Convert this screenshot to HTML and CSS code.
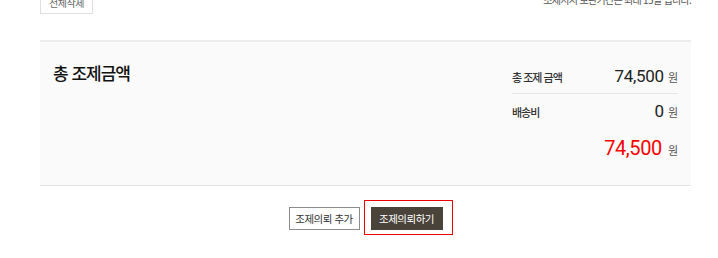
FILE: index.html
```html
<!DOCTYPE html>
<html lang="ko">
<head>
<meta charset="utf-8">
<title>조제 금액</title>
<link rel="stylesheet" href="styles.css">
</head>
<body>
<div class="wrap">
  <div class="toolbar">
    <button class="btn-del" type="button">전체삭제</button>
    <p class="notice">조제지시 보관기간은 최대 15일 입니다.</p>
  </div>

  <section class="summary">
    <h2 class="summary-title">총 조제금액</h2>
    <div class="price-box">
      <div class="price-row first">
        <span class="label">총 조제 금액</span>
        <span class="amount"><span class="num">74,500</span><span class="won">원</span></span>
      </div>
      <div class="price-row">
        <span class="label">배송비</span>
        <span class="amount"><span class="num">0</span><span class="won">원</span></span>
      </div>
      <div class="price-row total">
        <span class="amount"><span class="num">74,500</span><span class="won">원</span></span>
      </div>
    </div>
  </section>

  <div class="actions">
    <button class="btn btn-line" type="button">조제의뢰 추가</button>
    <span class="highlight">
      <button class="btn btn-dark" type="button">조제의뢰하기</button>
    </span>
  </div>
</div>
</body>
</html>
```

FILE: styles.css
```css
* { box-sizing: border-box; }
html, body { margin: 0; padding: 0; background: #fff; }
body {
  font-family: "Noto Sans CJK KR", "Noto Sans", sans-serif;
  color: #222;
  min-height: 258px;
}
.wrap {
  width: 651px;
  margin-left: 40px;
  padding-bottom: 30px;
}
.toolbar {
  display: flex;
  justify-content: space-between;
  align-items: flex-start;
  margin-top: -9px;
  height: 49px;
}
.btn-del {
  width: 53px;
  height: 23px;
  padding: 0;
  border: 1px solid #dedede;
  background: #fff;
  color: #666;
  font-family: inherit;
  font-size: 10px;
  letter-spacing: -0.5px;
  line-height: 21px;
}
.notice {
  margin: 0;
  margin-top: 1px;
  font-size: 10px;
  line-height: 16px;
  color: #555;
  letter-spacing: -0.7px;
}
.summary {
  display: flex;
  justify-content: space-between;
  background: #fafafa;
  border-top: 2px solid #ececec;
  border-bottom: 1px solid #e4e4e4;
  padding: 18px 13px 22px 13px;
}
.summary-title {
  margin: 0;
  font-size: 17px;
  font-weight: 500;
  letter-spacing: -1px;
  line-height: 26px;
  color: #111;
}
.price-box {
  width: 166px;
  padding-top: 5px;
}
.price-row {
  display: flex;
  justify-content: space-between;
  align-items: baseline;
  line-height: 20px;
}
.price-row.first {
  padding-bottom: 6px;
  border-bottom: 1px solid #e6e6e6;
  margin-bottom: 6px;
}
.label {
  font-size: 11px;
  letter-spacing: -1px;
  color: #333;
  font-weight: 500;
}
.amount { white-space: nowrap; }
.num {
  font-family: Roboto, "Liberation Sans", sans-serif;
  font-size: 17px;
  color: #222;
  letter-spacing: -0.3px;
}
.won {
  margin-left: 4px;
  font-size: 11px;
  color: #555;
}
.price-row.total {
  justify-content: flex-end;
  margin-top: 13px;
  line-height: 26px;
}
.price-row.total .num {
  font-size: 20px;
  color: #ff0000;
  letter-spacing: -0.4px;
}
.price-row.total .won { margin-left: 6px; }

.actions {
  display: flex;
  justify-content: center;
  gap: 11px;
  margin-top: 21px;
}
.btn {
  height: 23px;
  padding: 0;
  font-family: inherit;
  font-size: 10.5px;
  letter-spacing: -0.5px;
  line-height: 21px;
  cursor: pointer;
}
.btn-line {
  width: 71px;
  border: 1px solid #8c8c8c;
  background: #fff;
  color: #333;
}
.btn-dark {
  width: 72px;
  border: 1px solid #4a4339;
  background: #4a4339;
  color: #fff;
}
.highlight {
  position: relative;
  display: flex;
}
.highlight::after {
  content: "";
  position: absolute;
  left: -7px;
  right: -10px;
  top: -7px;
  bottom: -5px;
  border: 1px solid #ee0000;
  pointer-events: none;
}
```
